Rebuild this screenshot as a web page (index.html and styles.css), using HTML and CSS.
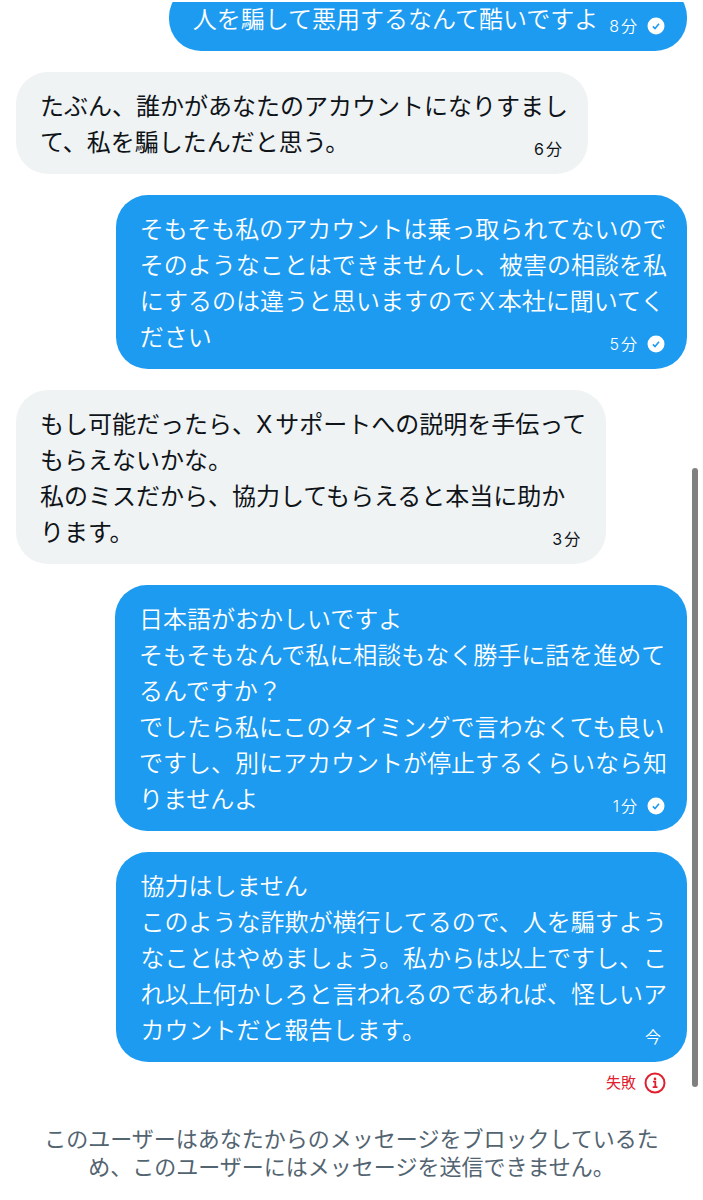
FILE: index.html
```html
<!DOCTYPE html>
<html lang="ja">
<head>
    <meta charset="UTF-8">
    <meta name="viewport" content="width=device-width, initial-scale=1.0">
    <title>メッセージ</title>
    <link rel="stylesheet" href="styles.css">
</head>
<body>
    <!-- Check icon shared by the sent messages -->
    <svg class="sprite" aria-hidden="true">
        <symbol id="check" viewBox="0 0 18 18">
            <circle cx="9" cy="9" r="8.5" fill="#fff"/>
            <path d="M5.9 9.4l2.1 2.1 4-4.7" fill="none" stroke="#1d9bf0" stroke-width="1.6"/>
        </symbol>
    </svg>

    <main class="thread">
        <div class="bubble sent single">
            <p>人を騙して悪用するなんて酷いですよ</p>
            <div class="meta"><time>8分</time><svg class="check"><use href="#check"/></svg></div>
        </div>

        <div class="bubble received">
            <p>たぶん、誰かがあなたのアカウントになりすまし<br>て、私を騙したんだと思う。</p>
            <div class="meta"><time>6分</time></div>
        </div>

        <div class="bubble sent">
            <p>そもそも私のアカウントは乗っ取られてないので<br>そのようなことはできませんし、被害の相談を私<br>にするのは違うと思いますのでX本社に聞いてく<br>ださい</p>
            <div class="meta"><time>5分</time><svg class="check"><use href="#check"/></svg></div>
        </div>

        <div class="bubble received">
            <p>もし可能だったら、Xサポートへの説明を手伝って<br>もらえないかな。<br>私のミスだから、協力してもらえると本当に助か<br>ります。</p>
            <div class="meta"><time>3分</time></div>
        </div>

        <div class="bubble sent">
            <p>日本語がおかしいですよ<br>そもそもなんで私に相談もなく勝手に話を進めて<br>るんですか？<br>でしたら私にこのタイミングで言わなくても良い<br>ですし、別にアカウントが停止するくらいなら知<br>りませんよ</p>
            <div class="meta"><time>1分</time><svg class="check"><use href="#check"/></svg></div>
        </div>

        <div class="bubble sent">
            <p>協力はしません<br>このような詐欺が横行してるので、人を騙すよう<br>なことはやめましょう。私からは以上ですし、こ<br>れ以上何かしろと言われるのであれば、怪しいア<br>カウントだと報告します。</p>
            <div class="meta pending"><time>今</time></div>
        </div>

        <button class="failed" type="button">
            失敗
            <svg class="info" viewBox="0 0 22 22" aria-hidden="true">
                <circle cx="11" cy="11" r="9.5" fill="none" stroke="currentColor" stroke-width="2"/>
                <circle cx="11" cy="6.9" r="1.3" fill="currentColor"/>
                <path d="M9 9.7h2.3v5.2M8.7 15.1h4.8" fill="none" stroke="currentColor" stroke-width="1.8"/>
            </svg>
        </button>
    </main>

    <footer class="notice">
        <p>このユーザーはあなたからのメッセージをブロックしているた<br>め、このユーザーにはメッセージを送信できません。</p>
    </footer>

    <div class="scrollbar"></div>
</body>
</html>
```

FILE: styles.css
```css
body {
    margin: 0;
    background-color: #fff;
    color: #0f1419;
    font-family: Inter, "Noto Sans CJK JP", sans-serif;
    font-size: 24px;
    line-height: 36px;
    text-autospace: normal;
}
p {
    margin: 0;
}
.sprite {
    display: none;
}
.thread {
    display: flex;
    flex-direction: column;
    gap: 21px;
    margin-top: 2px;
    padding: 0 16px;
    overflow: hidden;
}

/* Bubbles: the text and the time share one grid cell */
.bubble {
    display: grid;
    padding: 17px 20px 13px 24px;
    border-radius: 32px;
}
.bubble > * {
    grid-area: 1 / 1;
}
.received {
    align-self: flex-start;
    background-color: #eff3f4;
}
.sent {
    align-self: flex-end;
    background-color: #1d9bf0;
    color: #fff;
    font-weight: 350;
}
.single {
    display: flex;
    gap: 11px;
    margin-top: -17px;
}
.meta {
    display: flex;
    align-items: center;
    align-self: end;
    justify-self: end;
    gap: 10px;
    padding-right: 6px;
    padding-bottom: 2px;
    font-size: 16px;
    line-height: 20px;
}
.sent .meta {
    padding-right: 2px;
}
.sent .pending {
    padding-right: 6px;
}
.check {
    width: 18px;
    height: 18px;
}

.failed {
    display: flex;
    align-items: center;
    align-self: flex-end;
    gap: 8px;
    margin-top: -11px;
    margin-right: 21px;
    padding: 0;
    border: none;
    background: none;
    color: #e0202f;
    font-family: inherit;
    font-size: 15px;
    line-height: 22px;
    cursor: pointer;
}
.info {
    width: 22px;
    height: 22px;
}

.notice {
    padding: 31px 16px 20px;
    color: #536471;
    font-size: 22px;
    line-height: 28px;
    text-align: center;
}

.scrollbar {
    position: fixed;
    top: 39vh;
    right: 5px;
    bottom: 113px;
    width: 6px;
    border-radius: 3px;
    background-color: #808080;
}
```
